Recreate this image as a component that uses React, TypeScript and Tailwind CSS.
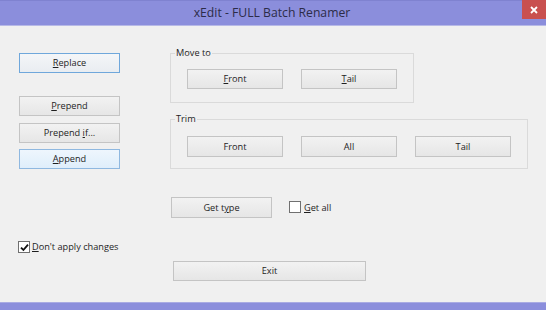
import type { ReactNode } from 'react';

const font = { fontFamily: '"Open Sans", "Noto Sans", sans-serif' };

// Windows-style access key underline
function Key({ children }: { children: ReactNode }) {
  return <span className="underline underline-offset-[1px] decoration-[0.5px]">{children}</span>;
}

function Btn({
  children,
  className = '',
  variant = 'normal',
}: {
  children: ReactNode;
  className?: string;
  variant?: 'normal' | 'default' | 'hover';
}) {
  const look =
    variant === 'default'
      ? 'border-[#6fa7db] bg-gradient-to-b from-[#f4f6f8] to-[#e9edf1]'
      : variant === 'hover'
        ? 'border-[#8fb8e0] bg-gradient-to-b from-[#eef6fd] to-[#dfeefb]'
        : 'border-[#c4c4c4] bg-gradient-to-b from-[#f2f2f2] to-[#e6e6e6]';
  return (
    <button
      className={`flex items-center justify-center border text-[9.2px] text-[#1e1e1e] leading-none ${look} ${className}`}
    >
      <span>{children}</span>
    </button>
  );
}

function Check({ checked }: { checked?: boolean }) {
  return (
    <span className="w-[12px] h-[12px] border border-[#707070] bg-white flex items-center justify-center">
      {checked && (
        <svg width="9" height="9" viewBox="0 0 9 9">
          <path d="M1 4.6 L3.4 7 L8 1.6" fill="none" stroke="#111" strokeWidth="1.8" />
        </svg>
      )}
    </span>
  );
}

function Group({ label, className, children }: { label: string; className: string; children: ReactNode }) {
  return (
    <div className={`relative border border-[#dadada] ${className}`}>
      <span className="absolute left-[4px] top-[-7px] bg-[#f0f0f0] px-[1px] text-[9.2px] leading-[12px] text-[#1e1e1e]">
        {label}
      </span>
      {children}
    </div>
  );
}

export default function App() {
  return (
    <div className="w-[546px] h-[310px] flex flex-col bg-[#f0f0f0] overflow-hidden" style={font}>
      {/* Title bar */}
      <div className="h-[26px] shrink-0 bg-[#8b8edc] border-t border-[#7f82d0] border-b border-b-[#b7b9e6] flex items-start">
        <div className="flex-1 h-full flex items-center justify-center pl-[22px] text-[12.2px] text-[#2c2c48]">
          xEdit - FULL Batch Renamer
        </div>
        <div className="w-[24px] h-[19px] mt-[-1px] bg-[#c9504f] flex items-center justify-center">
          <svg width="8" height="8" viewBox="0 0 8 8">
            <path d="M1 1 L7 7 M7 1 L1 7" stroke="#fff" strokeWidth="1.8" />
          </svg>
        </div>
      </div>

      {/* Body */}
      <div className="flex-1 flex flex-col">
        <div className="flex pt-[27px] pl-[19px]">
          <div className="flex flex-col w-[101px]">
            <Btn variant="default" className="w-full h-[20px]">
              <Key>R</Key>eplace
            </Btn>
            <Btn className="w-full h-[20px] mt-[23px]">
              <Key>P</Key>repend
            </Btn>
            <Btn className="w-full h-[20px] mt-[7px]">
              Prepend <Key>i</Key>f...
            </Btn>
            <Btn variant="hover" className="w-full h-[20px] mt-[6px]">
              <Key>A</Key>ppend
            </Btn>
          </div>

          <div className="flex flex-col ml-[50px]">
            <Group label="Move to" className="w-[244px] h-[50px] pt-[15px] pl-[16px]">
              <div className="flex gap-[18px]">
                <Btn className="w-[96px] h-[20px]">
                  <Key>F</Key>ront
                </Btn>
                <Btn className="w-[96px] h-[20px]">
                  <Key>T</Key>ail
                </Btn>
              </div>
            </Group>
            <Group label="Trim" className="w-[358px] h-[50px] mt-[16px] pt-[16px] pl-[16px]">
              <div className="flex gap-[18px]">
                <Btn className="w-[96px] h-[21px]">Front</Btn>
                <Btn className="w-[96px] h-[21px]">All</Btn>
                <Btn className="w-[96px] h-[21px]">Tail</Btn>
              </div>
            </Group>
          </div>
        </div>

        <div className="flex items-center mt-[28px] pl-[171px]">
          <Btn className="w-[101px] h-[21px]">
            Get t<Key>y</Key>pe
          </Btn>
          <label className="flex items-center ml-[17px] gap-[3px] text-[9.2px] text-[#1e1e1e]">
            <Check />
            <span>
              <Key>G</Key>et all
            </span>
          </label>
        </div>

        <label className="flex items-center mt-[23px] ml-[18px] h-[12px] gap-[2px] text-[9.2px] text-[#1e1e1e]">
          <Check checked />
          <span>
            <Key>D</Key>on't apply changes
          </span>
        </label>

        <div className="pl-[173px] mt-[8px]">
          <Btn className="w-[193px] h-[20px]">Exit</Btn>
        </div>
      </div>

      {/* Bottom frame */}
      <div className="h-[8px] shrink-0 bg-[#8b8edc] border-t border-[#a9abe3]" />
    </div>
  );
}
